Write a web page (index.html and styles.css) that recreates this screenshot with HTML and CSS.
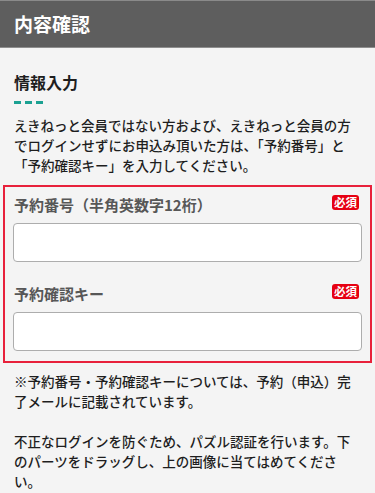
FILE: index.html
```html
<!DOCTYPE html>
<html lang="ja">
<head>
<meta charset="utf-8">
<title>内容確認</title>
<link rel="stylesheet" href="styles.css">
</head>
<body>
<header class="page-header">
  <h1 class="page-title">内容確認</h1>
</header>
<main class="content">
  <h2 class="section-title">情報入力</h2>
  <div class="dashes"><span></span><span></span><span></span></div>
  <p class="lead">えきねっと会員ではない方および、えきねっと会員の方でログインせずにお申込み頂いた方は、「予約番号」と「予約確認キー」を入力してください。</p>
  <div class="form-box">
    <div class="field">
      <div class="field-head">
        <label class="field-label" for="rsv">予約番号（半角英数字12桁）</label>
        <span class="badge">必須</span>
      </div>
      <input class="field-input" id="rsv" type="text">
    </div>
    <div class="field field-second">
      <div class="field-head">
        <label class="field-label" for="key">予約確認キー</label>
        <span class="badge">必須</span>
      </div>
      <input class="field-input" id="key" type="text">
    </div>
  </div>
  <p class="note">※予約番号・予約確認キーについては、予約（申込）完了メールに記載されています。</p>
  <p class="note note-gap">不正なログインを防ぐため、パズル認証を行います。下のパーツをドラッグし、上の画像に当てはめてください。</p>
</main>
</body>
</html>
```

FILE: styles.css
```css
* { box-sizing: border-box; }
html, body { margin: 0; padding: 0; }
body {
  background: #f4f4f4;
  font-family: "Noto Sans CJK JP", "Noto Sans", sans-serif;
  color: #1e1e1e;
  width: 375px;
  overflow: hidden;
}
.page-header {
  height: 48px;
  background: #5e5e5e;
  border-top: 1px solid #8a8a8a;
  border-bottom: 1px solid #8e8e8e;
  display: flex;
  align-items: center;
  padding-left: 14px;
}
.page-title {
  margin: 0;
  color: #fff;
  font-size: 19px;
  font-weight: 700;
  line-height: 24px;
}
.content {
  padding: 0 14px;
}
.section-title {
  margin: 22px 0 0;
  font-size: 16px;
  font-weight: 700;
  line-height: 24px;
  color: #1e1e1e;
}
.dashes {
  display: flex;
  gap: 4px;
  margin-top: 7px;
  height: 3px;
}
.dashes span {
  width: 7px;
  height: 3px;
  background: #1ba192;
}
.lead {
  margin: 11px 0 0;
  font-size: 13.5px;
  font-weight: 500;
  line-height: 20px;
}
.form-box {
  margin: 10px -11px 0;
  border: 2px solid #e8213b;
  padding: 8px 8px 10px;
}
.field-head {
  display: flex;
  justify-content: space-between;
  align-items: flex-start;
  height: 20px;
}
.field-label {
  font-size: 15px;
  font-weight: 700;
  line-height: 20px;
  color: #575757;
  padding-left: 1px;
}
.badge {
  margin-right: 3px;
  height: 15px;
  padding: 0 2px;
  background: #e60012;
  color: #fff;
  font-size: 11.5px;
  font-weight: 700;
  line-height: 15px;
  border-radius: 3px;
}
.field-input {
  display: block;
  width: 100%;
  height: 39px;
  margin-top: 8px;
  border: 1px solid #adadad;
  border-radius: 4px;
  background: #fff;
}
.field-second {
  margin-top: 22px;
}
.note {
  margin: 8px 0 0;
  font-size: 13.5px;
  font-weight: 500;
  line-height: 20px;
}
.note-gap {
  margin-top: 20px;
}
```
